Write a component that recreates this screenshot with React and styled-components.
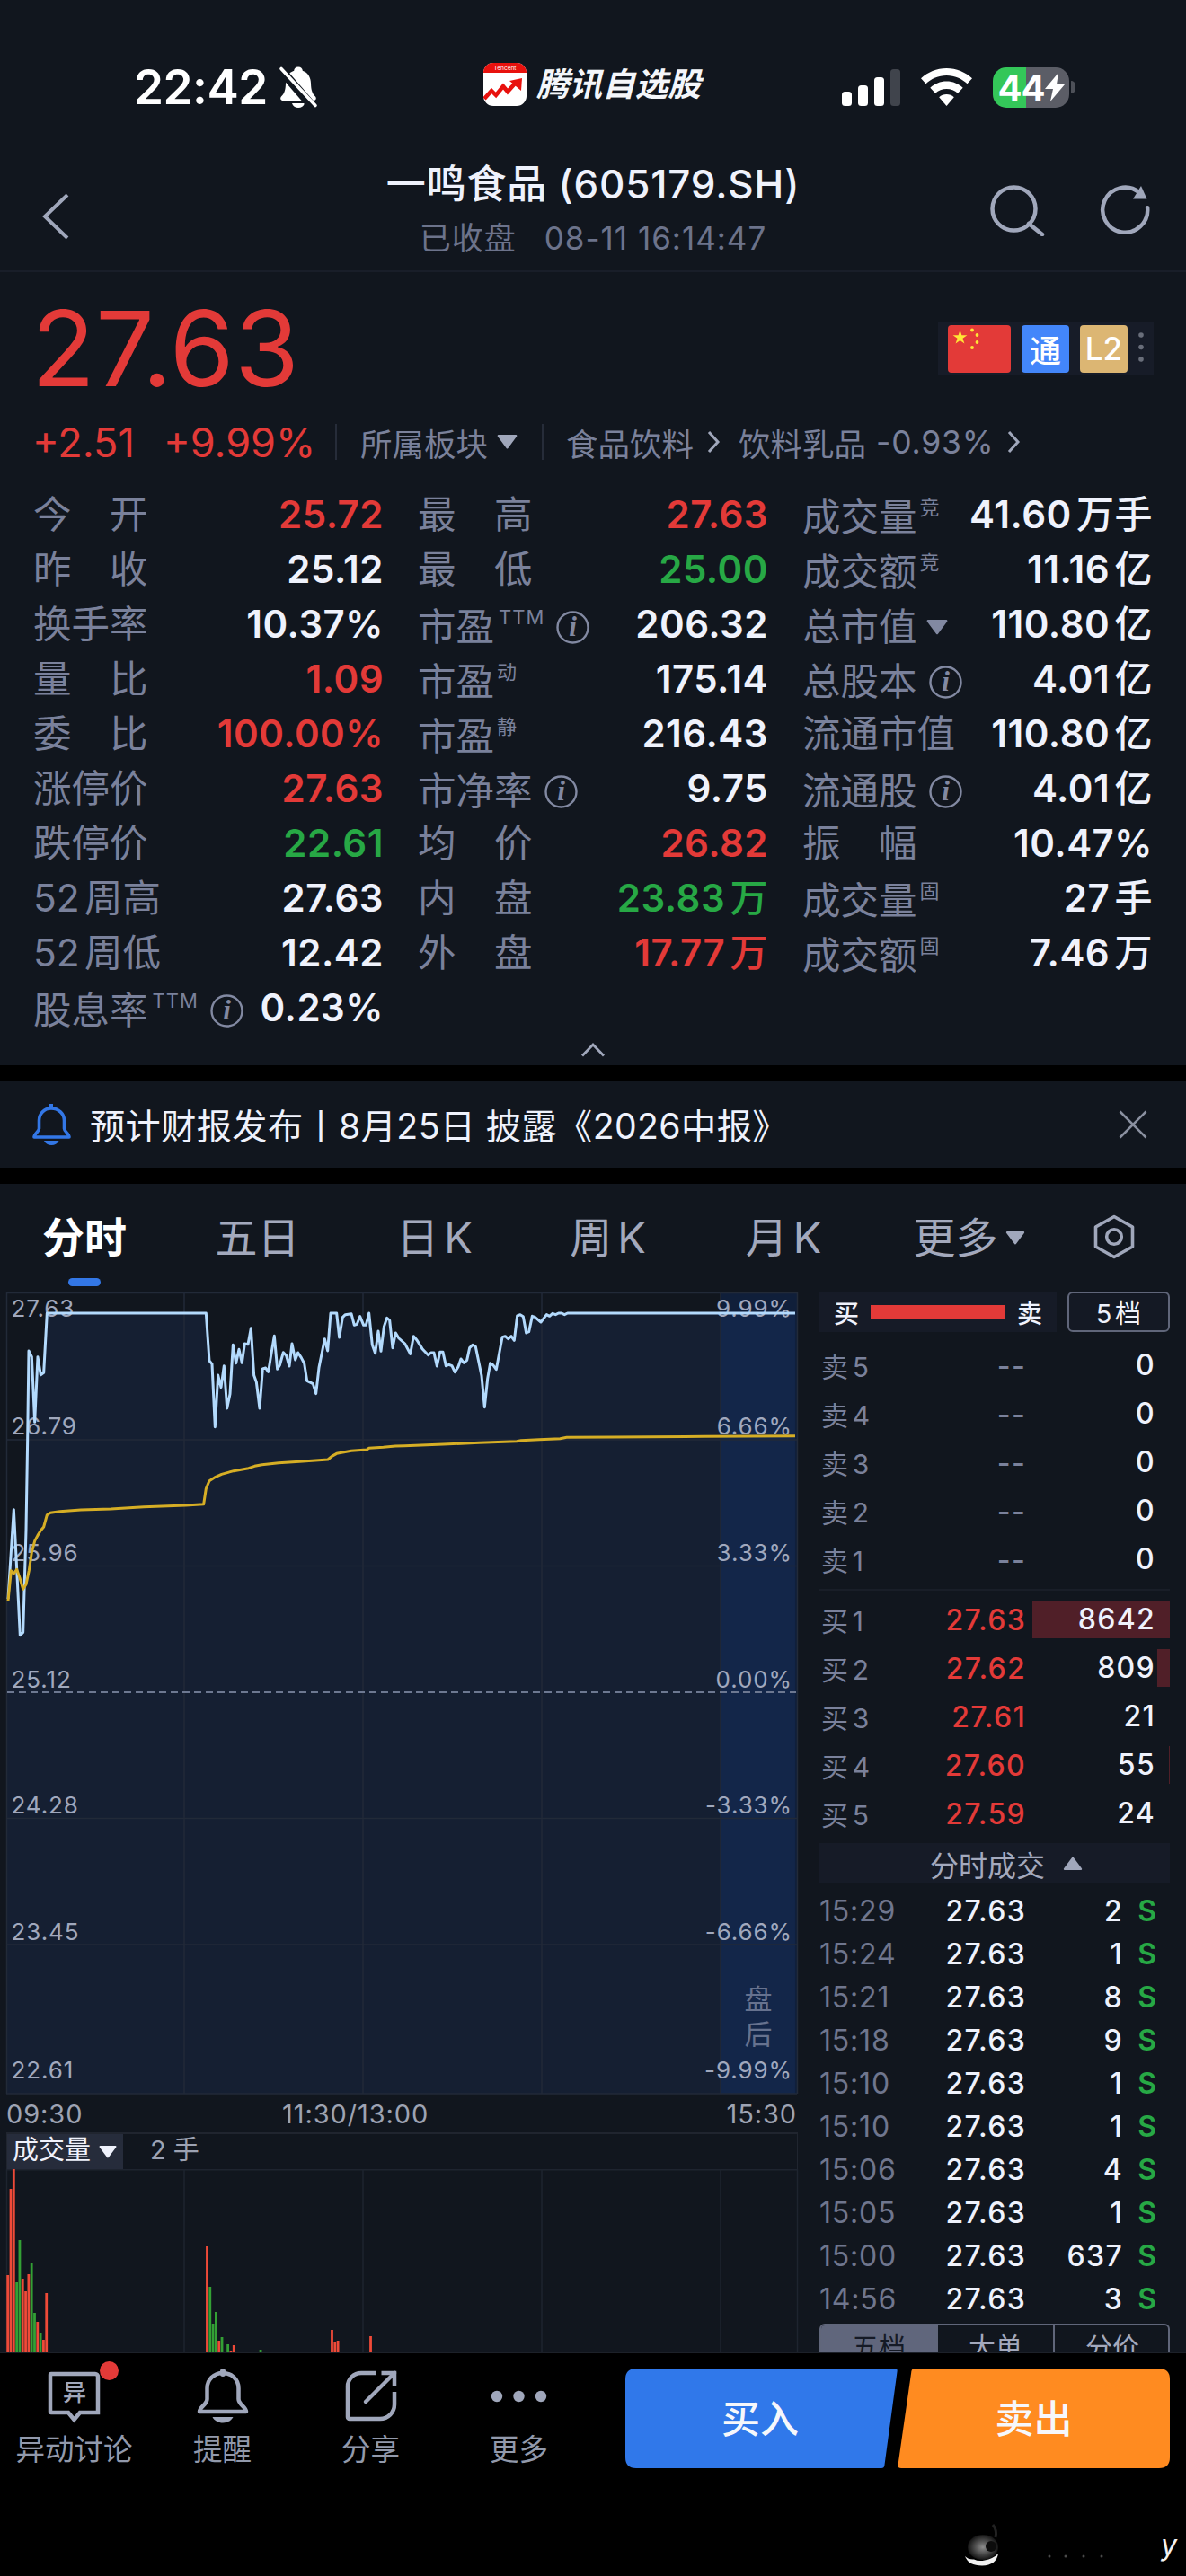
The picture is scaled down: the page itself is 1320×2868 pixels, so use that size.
import React from 'react';
import styled, { createGlobalStyle } from 'styled-components';

const RED = '#e33a38';
const GREEN = '#27a845';
const WHITE = '#eff2fc';
const LABEL = '#7a819b';
const ICON = '#a0a7bb';

const tones = { up: RED, down: GREEN, flat: WHITE };

const GlobalStyle = createGlobalStyle`
  * { box-sizing: border-box; }
  body {
    margin: 0;
    background: #000;
    font-family: Inter, "Noto Sans CJK SC", sans-serif;
    text-autospace: normal;
  }
  svg { display: block; flex: none; }
`;

const Screen = styled.div`
  width: 1320px;
  height: 2868px;
  overflow: hidden;
  background: #000;
  color: ${WHITE};
  white-space: nowrap;
`;

/* ---------- status bar ---------- */

const StatusBar = styled.div`
  display: grid;
  grid-template-columns: 538px 399px 1fr;
  align-items: center;
  height: 150px;
  padding-top: 44px;
  background: #11161e;
`;

const StatusLeft = styled.div`
  display: flex;
  align-items: center;
  gap: 12px;
  padding-left: 149px;
`;

const Clock = styled.span`
  font-size: 53px;
  font-weight: 600;
  letter-spacing: -0.5px;
  color: #fff;
`;

const Brand = styled.div`
  display: flex;
  align-items: center;
  gap: 11px;
  padding-bottom: 7px;
`;

const BrandName = styled.span`
  font-size: 36.6px;
  font-weight: 700;
  font-style: italic;
  line-height: 48px;
  color: #f4f6fa;
`;

const StatusRight = styled.div`
  display: flex;
  align-items: center;
  gap: 23px;
`;

const Battery = styled.div`
  display: flex;
  align-items: center;
  gap: 2px;
`;

const BatteryBody = styled.div`
  display: flex;
  align-items: center;
  justify-content: center;
  width: 85px;
  height: 45px;
  border-radius: 15px;
  background: linear-gradient(90deg, #34c759 44%, #5b5d66 44%);
  font-size: 40px;
  font-weight: 700;
  letter-spacing: -1px;
  color: #fff;
`;

const BatteryTip = styled.div`
  width: 5px;
  height: 14px;
  border-radius: 0 5px 5px 0;
  background: #4d5058;
`;

/* ---------- navigation ---------- */

const NavBar = styled.div`
  display: grid;
  grid-template-columns: 240px 1fr 240px;
  height: 153px;
  border-bottom: 2px solid #191e29;
  background: #11161e;
`;

const NavBack = styled.div`
  padding: 64px 0 0 46px;
`;

const NavTitle = styled.div`
  display: flex;
  flex-direction: column;
  align-items: center;
  padding-top: 25px;
`;

const StockName = styled.div`
  font-size: 44px;
  font-weight: 500;
  line-height: 60px;
  letter-spacing: 0.8px;
`;

const MarketState = styled.div`
  display: flex;
  gap: 31px;
  font-size: 35px;
  line-height: 60px;
  letter-spacing: 1px;
  color: #6c738b;
`;

const NavActions = styled.div`
  display: flex;
  gap: 61px;
  padding: 55px 0 0 21px;
`;

/* ---------- quote ---------- */

const Quote = styled.section`
  height: 883px;
  background: #11161e;
`;

const PriceRow = styled.div`
  display: flex;
  align-items: center;
  justify-content: space-between;
  height: 170px;
  padding: 0 36px 0 35px;
`;

const Price = styled.div`
  font-size: 116px;
  line-height: 170px;
  letter-spacing: 0.5px;
  color: ${RED};
`;

const Badges = styled.div`
  display: flex;
  align-items: center;
  gap: 12px;
  height: 60px;
  padding: 0 11px;
  background: #171c28;
`;

const Badge = styled.div`
  display: flex;
  align-items: center;
  justify-content: center;
  width: 53px;
  height: 53px;
  border-radius: 4px;
  background: ${p => p.$bg};
  color: #fff;
  font-size: 35px;
  font-weight: 500;
`;

const ChangeRow = styled.div`
  display: flex;
  align-items: center;
  height: 38px;
  padding-left: 36px;
  font-size: 35.5px;
  color: ${LABEL};
`;

const Change = styled.span`
  width: ${p => p.$width}px;
  font-size: 45px;
  color: ${RED};
`;

const Divider = styled.span`
  width: 2px;
  height: 40px;
  background: #262c39;
`;

const Sector = styled.span`
  display: flex;
  align-items: center;
  gap: ${p => p.$gap || 15}px;
  padding-left: ${p => p.$left || 0}px;
  padding-right: ${p => p.$right || 0}px;
`;

const SectorChange = styled.span`
  margin-left: -4px;
  letter-spacing: 0.8px;
`;

const StatGrid = styled.div`
  display: grid;
  grid-template-columns: repeat(3, 390px);
  column-gap: 38px;
  padding: 31px 0 0 37px;
`;

const StatRow = styled.div`
  display: flex;
  align-items: center;
  justify-content: space-between;
  height: 61px;
`;

const StatLabel = styled.span`
  display: flex;
  align-items: center;
  margin-top: ${p => (p.$drop ? 7 : 0)}px;
  font-size: 42.5px;
  line-height: 54px;
  color: ${LABEL};
`;

const StatSup = styled.sup`
  margin: 0 0 22px ${p => (p.$latin ? 5 : 3)}px;
  font-size: 22px;
  line-height: 24px;
  letter-spacing: ${p => (p.$latin ? 1 : 0)}px;
`;

const StatIcon = styled.span`
  margin-left: ${p => p.$left}px;
`;

const StatValue = styled.span`
  font-size: 42px;
  font-weight: 600;
  line-height: 54px;
  letter-spacing: 0.5px;
  color: ${p => tones[p.$tone]};
`;

const StatUnit = styled.span`
  font-weight: 500;
`;

const Collapse = styled.div`
  display: flex;
  justify-content: center;
  padding-top: 8px;
`;

/* ---------- notice ---------- */

const Notice = styled.section`
  display: flex;
  align-items: center;
  height: 96px;
  margin: 18px 0;
  padding: 0 43px 0 35px;
  background: #11161e;
`;

const NoticeText = styled.span`
  flex: 1;
  padding: 0 0 3px 20px;
  font-size: 39.2px;
  letter-spacing: 0.4px;
  text-autospace: no-autospace;
`;

/* ---------- period tabs ---------- */

const Tabs = styled.div`
  display: flex;
  align-items: flex-start;
  height: 120px;
  padding: 25px 0 0;
  background: #11161e;
`;

const Tab = styled.div`
  display: flex;
  flex-direction: column;
  align-items: center;
  width: ${p => p.$width}px;
  padding-left: ${p => p.$shift || 0}px;
  font-size: 47px;
  font-weight: ${p => (p.$active ? 700 : 400)};
  line-height: 70px;
  color: ${p => (p.$active ? '#fff' : '#a3a9bd')};

  &::after {
    content: '';
    width: 36px;
    height: 9px;
    margin-top: 10px;
    border-radius: 5px;
    background: ${p => (p.$active ? '#3377e6' : 'transparent')};
  }
`;

const TabMore = styled.span`
  display: flex;
  align-items: center;
  gap: 8px;
`;

const TabSettings = styled.div`
  padding: 9px 0 0 43px;
`;

/* ---------- main area ---------- */

const Main = styled.main`
  display: grid;
  grid-template-columns: 912px 390px;
  height: 1181px;
  overflow: hidden;
  background: #11161e;
`;

const ChartColumn = styled.div`
  display: flex;
  flex-direction: column;
`;

const TimeAxis = styled.div`
  display: grid;
  grid-template-columns: 307px 1fr auto;
  align-items: center;
  width: 880px;
  height: 42px;
  margin-left: 7px;
  font-size: 29px;
  letter-spacing: 0.9px;
  color: #9da3b3;
`;

const VolumeHeader = styled.div`
  display: flex;
  align-items: center;
  width: 881px;
  height: 41px;
  margin-left: 7px;
  border: 1px solid #20252f;
  border-width: 2px 1px 0;
  font-size: 29px;
  line-height: 36px;
  color: #9da3b3;

  span { padding-bottom: 4px; }
`;

const VolumePicker = styled.div`
  display: flex;
  align-items: center;
  gap: 9px;
  width: 129px;
  height: 39px;
  margin-right: 30px;
  padding-left: 6px;
  background: #262c3b;
  color: ${WHITE};
`;

const Book = styled.aside`
  display: flex;
  flex-direction: column;
`;

const BookHead = styled.div`
  display: flex;
  gap: 12px;
  height: 45px;
`;

const RatioBar = styled.div`
  display: flex;
  align-items: center;
  justify-content: space-between;
  width: 264px;
  height: 45px;
  padding: 0 16px;
  background: #161b27;
  font-size: 28px;
  font-weight: 500;

  i {
    width: 150px;
    height: 15px;
    background: ${RED};
  }
`;

const LevelButton = styled.div`
  display: flex;
  align-items: center;
  justify-content: center;
  width: 114px;
  height: 45px;
  padding-bottom: 2px;
  border: 2px solid #60667a;
  border-radius: 6px;
  background: #141924;
  font-size: 29px;
`;

const Levels = styled.div`
  padding: ${p => p.$pad};
  border-bottom: ${p => (p.$line ? '2px solid #191e28' : 'none')};
`;

const LevelRow = styled.div`
  display: grid;
  grid-template-columns: 90px 140px 160px;
  align-items: center;
  height: 54px;
  font-size: 32px;
  letter-spacing: 1.3px;
  text-align: right;
`;

const LevelName = styled.span`
  padding-left: 2px;
  font-size: 30px;
  text-align: left;
  color: ${LABEL};
  letter-spacing: 1px;
`;

const LevelPrice = styled.span`
  font-weight: 450;
  color: ${p => (p.$empty ? LABEL : RED)};
`;

const LevelVolume = styled.span`
  height: 42px;
  margin-left: 7px;
  padding-right: 16px;
  line-height: 42px;
  font-weight: 500;
  background: linear-gradient(#501f28, #501f28) no-repeat right / ${p => p.$bar}px 42px;
`;

const TradesHead = styled.div`
  display: flex;
  align-items: center;
  justify-content: center;
  gap: 20px;
  height: 45px;
  padding-left: 26px;
  background: #161b27;
  font-size: 32px;
  color: #a3a9bd;
`;

const Trades = styled.div`
  padding-top: 6px;
`;

const TradeRow = styled.div`
  display: grid;
  grid-template-columns: 90px 140px 108px 37px;
  align-items: center;
  height: 48px;
  font-size: 32px;
  font-weight: 500;
  letter-spacing: 1.3px;
  text-align: right;

  time {
    font-weight: 400;
    letter-spacing: 0.8px;
    text-align: left;
    color: #6f768e;
  }

  b {
    font-weight: 600;
    letter-spacing: 0;
    color: ${GREEN};
  }
`;

const Segments = styled.div`
  display: grid;
  grid-template-columns: repeat(3, 130px);
  height: 54px;
  margin-top: 4px;
  overflow: hidden;
  border: 2px solid #60667a;
  border-radius: 6px;
`;

const Segment = styled.div`
  border-right: 2px solid #60667a;
  background: ${p => (p.$active ? '#60667c' : 'transparent')};
  color: ${p => (p.$active ? '#151a26' : '#a3a9bd')};
  font-size: 30px;
  line-height: 49px;
  text-align: center;
`;

/* ---------- bottom bar ---------- */

const BottomBar = styled.footer`
  display: flex;
  height: 170px;
  border-top: 1px solid #1d2129;
  background: #000;
`;

const Action = styled.div`
  display: flex;
  flex-direction: column;
  align-items: center;
  gap: 8px;
  width: 165px;
  padding-top: 12px;
  font-size: 32.5px;
  line-height: 48px;
  color: #9299ab;

  svg { overflow: visible; }
`;

const TradeButton = styled.div`
  display: flex;
  align-items: center;
  justify-content: center;
  width: 303px;
  height: 111px;
  margin: 17px 0 0 ${p => p.$left}px;
  padding-bottom: 6px;
  padding-right: ${p => p.$right || 0}px;
  clip-path: path('${p => p.$shape}');
  background: ${p => p.$bg};
  font-size: 43px;
  font-weight: 500;
  color: #f6f7fb;
`;

const Watermark = styled.div`
  display: flex;
  justify-content: flex-end;
  padding: 20px 8px 0 0;
`;

/* ---------- icons ---------- */

const Triangle = ({ w, h, color, up }) => (
  <svg width={w} height={h} viewBox="0 0 20 14">
    <path
      d={up ? 'M1.5 13h17L10 1.5z' : 'M1.5 1h17L10 12.5z'}
      fill={color}
      stroke={color}
      strokeWidth="2"
      strokeLinejoin="round"
    />
  </svg>
);

const ChevronSmall = () => (
  <svg width="15" height="26" viewBox="0 0 15 26" fill="none">
    <path d="M2 2l10 11L2 24" stroke={ICON} strokeWidth="3" />
  </svg>
);

const InfoIcon = () => (
  <svg width="37" height="37" viewBox="0 0 37 37">
    <circle cx="18.5" cy="18.5" r="17" fill="none" stroke="#8289a2" strokeWidth="2.4" />
    <text
      x="18.5"
      y="28"
      textAnchor="middle"
      fontFamily="Liberation Serif, serif"
      fontStyle="italic"
      fontWeight="700"
      fontSize="31"
      fill="#8289a2"
    >
      i
    </text>
  </svg>
);

const MuteBell = () => (
  <svg width="44" height="48" viewBox="0 0 44 48">
    <path
      d="M22 1.5c3 0 4.600 2 4.800 4.200 6 2 9 7.300 9.200 14 .2 8 1.600 11.300 5 14.800 1.600 1.800.7 4.500-2 4.500H5c-2.700 0-3.600-2.700-2-4.500 3.400-3.500 4.800-6.800 5-14.800.2-6.700 3.200-12 9.200-14C17.400 3.500 19 1.500 22 1.500z"
      fill="#fff"
    />
    <path d="M15 42h14c-1 3.200-3.600 5-7 5s-6-1.800-7-5z" fill="#fff" />
    <path d="M0 2l40 46" stroke="#11161e" strokeWidth="10" />
    <path d="M3 3.500l38 41" stroke="#fff" strokeWidth="3.600" strokeLinecap="round" />
  </svg>
);

const BrandLogo = () => (
  <svg width="48" height="48" viewBox="0 0 48 48">
    <rect width="48" height="48" rx="11" fill="#fff" />
    <path d="M0 11A11 11 0 0 1 11 0h26a11 11 0 0 1 11 11z" fill="#e8110d" />
    <text x="24" y="8" textAnchor="middle" fontSize="6.500" fill="#fff">Tencent</text>
    <path d="M1 40l8-9 5 5 8-10 5 6 9-10" fill="none" stroke="#e8110d" strokeWidth="4.500" />
    <path d="M29 20l14-3-1 14z" fill="#e8110d" />
  </svg>
);

const Signal = () => (
  <svg width="65" height="42" viewBox="0 0 65 42" fill="#fff">
    <rect x="0" y="26" width="11" height="16" rx="3.500" />
    <rect x="18" y="19" width="11" height="23" rx="3.500" />
    <rect x="36" y="10" width="11" height="32" rx="3.500" />
    <rect x="54" y="1" width="11" height="41" rx="3.500" fill="#40444c" />
  </svg>
);

const Wifi = () => (
  <svg width="57" height="42" viewBox="0 0 57 42" fill="#fff">
    <path d="M28.500 0C39.500 0 49.500 4.300 57 11.300l-5.500 6C45.500 11.500 37.400 8 28.500 8S11.500 11.500 5.500 17.300L0 11.300C7.500 4.300 17.500 0 28.500 0z" />
    <path d="M28.500 14.500c7 0 13.400 2.700 18.200 7.200l-5.700 6.100c-3.300-3-7.700-4.900-12.500-4.900s-9.200 1.900-12.500 4.900l-5.700-6.100c4.800-4.500 11.200-7.200 18.200-7.200z" />
    <path d="M28.500 29c3.200 0 6.100 1.200 8.300 3.200L28.500 42l-8.300-9.800c2.200-2 5.100-3.200 8.300-3.200z" />
  </svg>
);

const Bolt = () => (
  <svg width="22" height="32" viewBox="0 0 22 32">
    <path d="M15 0L0 18h9L6 32l16-19h-9z" fill="#fff" />
  </svg>
);

const BackIcon = () => (
  <svg width="32" height="54" viewBox="0 0 32 54" fill="none">
    <path d="M29 3L4 27l25 24" stroke={ICON} strokeWidth="4" />
  </svg>
);

const SearchIcon = () => (
  <svg width="62" height="58" viewBox="0 0 62 58" fill="none" stroke={ICON} strokeWidth="4.500">
    <circle cx="27.500" cy="27.500" r="24" />
    <path d="M44 44l15 12" strokeLinecap="round" />
  </svg>
);

const RefreshIcon = () => (
  <svg width="58" height="58" viewBox="0 0 58 58" fill="none">
    <path d="M53 25A25 25 0 1 1 43 8.500" stroke={ICON} strokeWidth="4.500" strokeLinecap="round" transform="rotate(3 28 28)" />
    <path d="M46 2l6.500 14.500H37z" fill={ICON} />
  </svg>
);

const Flag = () => (
  <svg width="70" height="53" viewBox="0 0 70 53">
    <rect width="70" height="53" rx="4" fill={RED} />
    <g fill="#ffe636">
      <path d="M13.500 5.500l1.900 5.700h6l-4.900 3.500 1.900 5.800-4.900-3.600-4.900 3.600 1.900-5.800-4.900-3.500h6z" />
      <circle cx="27" cy="5.500" r="1.900" />
      <circle cx="32.500" cy="11" r="1.900" />
      <circle cx="32.500" cy="19" r="1.900" />
      <circle cx="27" cy="25" r="1.900" />
    </g>
  </svg>
);

const Dots = () => (
  <svg width="6" height="36" viewBox="0 0 6 36" fill="#696e7a">
    <circle cx="3" cy="3" r="2.800" />
    <circle cx="3" cy="16.500" r="2.800" />
    <circle cx="3" cy="30" r="2.800" />
  </svg>
);

const NoticeBell = () => (
  <svg width="45" height="48" viewBox="0 0 45 48" fill="none">
    <path
      d="M22 6c-8 0-13.500 6-13.500 13.500v9c0 3-5.500 6-5.500 9.500h39c0-3.500-5.500-6.500-5.500-9.500v-9C36.500 12 30 6 22 6z"
      stroke="#3377e6"
      strokeWidth="3.600"
      strokeLinejoin="round"
    />
    <path d="M22 1v5" stroke="#3377e6" strokeWidth="4" />
    <path d="M14 42h16.500c-1.500 3.200-4.600 5-8.200 5s-6.800-1.800-8.300-5z" fill="#3377e6" />
  </svg>
);

const CloseIcon = () => (
  <svg width="32" height="32" viewBox="0 0 32 32">
    <path d="M1.500 1.500l29 29M30.500 1.500l-29 29" stroke="#8a90a0" strokeWidth="2.600" />
  </svg>
);

const HexIcon = () => (
  <svg width="46" height="50" viewBox="0 0 46 50" fill="none" stroke={ICON} strokeWidth="3.600" strokeLinejoin="round">
    <path d="M23 2.500l20.500 11.500v22L23 47.500 2.500 36V14z" />
    <circle cx="23" cy="25" r="8.300" />
  </svg>
);

const DiscussIcon = () => (
  <svg width="116" height="64" viewBox="25 0 116 64" fill="none">
    <path
      d="M57 11h49a3 3 0 0 1 3 3v40H89l-6.500 8-6.500-8H57a1 1 0 0 1-1-1V12a1 1 0 0 1 1-1z"
      stroke={ICON}
      strokeWidth="4.500"
    />
    <text x="83" y="41" textAnchor="middle" fontSize="26" fontWeight="500" fill={ICON}>异</text>
    <circle cx="121.500" cy="7.500" r="10.500" fill={RED} />
  </svg>
);

const AlertIcon = () => (
  <svg width="60" height="64" viewBox="0 0 60 64" fill="none">
    <path
      d="M30 10c-10 0-17.500 7.500-17.500 17v12c0 6-8.500 9-8.500 14h52c0-5-8.500-8-8.500-14V27C47.500 17.500 40 10 30 10z"
      stroke={ICON}
      strokeWidth="4.500"
      strokeLinejoin="round"
    />
    <path d="M30 8v3" stroke={ICON} strokeWidth="6" strokeLinecap="round" />
    <path d="M18.500 59h23c-2 4-6.500 6.500-11.500 6.500s-9.500-2.500-11.500-6.500z" fill={ICON} />
  </svg>
);

const ShareIcon = () => (
  <svg width="60" height="64" viewBox="0 0 60 64" fill="none" stroke={ICON} strokeWidth="4.500">
    <path d="M35 10H19A15 15 0 0 0 4 25v34a2 2 0 0 0 2 2h34a16 16 0 0 0 16-16V31" />
    <path d="M41.500 10H56v14.500" />
    <path d="M56 10L24 42" strokeLinecap="round" />
  </svg>
);

const MoreIcon = () => (
  <svg width="64" height="64" viewBox="0 0 64 64" fill={ICON}>
    <circle cx="7" cy="36" r="6.200" />
    <circle cx="31.500" cy="36" r="6.200" />
    <circle cx="56" cy="36" r="6.200" />
  </svg>
);

/* ---------- data ---------- */

const stats = [
  [
    { label: '今　开', value: '25.72', tone: 'up' },
    { label: '昨　收', value: '25.12' },
    { label: '换手率', value: '10.37%' },
    { label: '量　比', value: '1.09', tone: 'up' },
    { label: '委　比', value: '100.00%', tone: 'up' },
    { label: '涨停价', value: '27.63', tone: 'up' },
    { label: '跌停价', value: '22.61', tone: 'down' },
    { label: '52周高', value: '27.63' },
    { label: '52周低', value: '12.42' },
    { label: '股息率', sup: 'TTM', info: true, value: '0.23%' },
  ],
  [
    { label: '最　高', value: '27.63', tone: 'up' },
    { label: '最　低', value: '25.00', tone: 'down' },
    { label: '市盈', sup: 'TTM', info: true, value: '206.32' },
    { label: '市盈', sup: '动', value: '175.14' },
    { label: '市盈', sup: '静', value: '216.43' },
    { label: '市净率', info: true, value: '9.75' },
    { label: '均　价', value: '26.82', tone: 'up' },
    { label: '内　盘', value: '23.83', unit: '万', tone: 'down' },
    { label: '外　盘', value: '17.77', unit: '万', tone: 'up' },
  ],
  [
    { label: '成交量', sup: '竞', value: '41.60', unit: '万手' },
    { label: '成交额', sup: '竞', value: '11.16', unit: '亿' },
    { label: '总市值', menu: true, value: '110.80', unit: '亿' },
    { label: '总股本', info: true, value: '4.01', unit: '亿' },
    { label: '流通市值', value: '110.80', unit: '亿' },
    { label: '流通股', info: true, value: '4.01', unit: '亿' },
    { label: '振　幅', value: '10.47%' },
    { label: '成交量', sup: '固', value: '27', unit: '手' },
    { label: '成交额', sup: '固', value: '7.46', unit: '万' },
  ],
];

const periods = [
  { name: '分时', width: 188, active: true },
  { name: '五日', width: 197 },
  { name: '日K', width: 197 },
  { name: '周K', width: 189 },
  { name: '月K', width: 202 },
];

const asks = ['卖5', '卖4', '卖3', '卖2', '卖1'];

const bids = [
  { name: '买1', price: '27.63', volume: '8642', bar: 153 },
  { name: '买2', price: '27.62', volume: '809', bar: 14 },
  { name: '买3', price: '27.61', volume: '21', bar: 0 },
  { name: '买4', price: '27.60', volume: '55', bar: 1 },
  { name: '买5', price: '27.59', volume: '24', bar: 0 },
];

const trades = [
  ['15:29', 2],
  ['15:24', 1],
  ['15:21', 8],
  ['15:18', 9],
  ['15:10', 1],
  ['15:10', 1],
  ['15:06', 4],
  ['15:05', 1],
  ['15:00', 637],
  ['14:56', 3],
];

// both lines are stored at three times the drawn size
const priceLine =
  '27,1080 46,782 55,960 67,1202 77,1192 87,850 92,550 96,252 106,272 116,490 126,272 136,332 146,325 157,126 ' +
  '688,126 699,285 708,296 718,506 728,333 738,374 748,302 758,444 768,396 778,232 788,293 798,247 808,292 ' +
  '817,228 828,230 838,176 848,334 856,356 867,444 877,312 887,309 896,322 906,260 916,202 926,313 934,300 ' +
  '946,257 956,268 966,303 975,228 986,282 995,258 1006,275 1016,294 1025,352 1045,362 1055,395 1065,308 ' +
  '1075,258 1084,212 1094,252 1104,126 1124,126 1133,207 1144,140 1153,131 1173,128 1183,166 1192,163 ' +
  '1202,137 1214,166 1222,166 1232,126 1243,232 1253,260 1263,186 1272,253 1282,172 1292,142 1301,150 ' +
  '1311,242 1321,192 1332,210 1352,228 1370,262 1381,203 1392,216 1410,245 1430,266 1439,258 1449,258 ' +
  '1459,303 1469,256 1479,256 1489,302 1499,298 1509,302 1519,323 1530,305 1539,279 1549,292 1559,283 ' +
  '1568,242 1578,232 1588,238 1608,335 1618,440 1628,345 1637,293 1647,300 1657,314 1677,206 1687,203 ' +
  '1697,212 1707,203 1717,217 1727,135 1737,131 1747,137 1757,192 1766,188 1777,136 1786,139 1806,156 ' +
  '1825,131 1835,136 1845,127 1855,131 1865,126 1875,126 1885,131 1895,126 2655,126';

const averageLine =
  '27,1087 37,986 46,996 56,982 66,1010 77,1048 87,1032 97,985 106,925 116,887 126,868 136,852 146,840 ' +
  '157,800 168,793 200,788 270,783 370,780 480,773 620,768 680,764 688,712 699,686 720,673 740,664 780,653 ' +
  '830,644 850,637 875,632 930,626 1000,622 1095,615 1108,604 1124,595 1173,586 1225,582 1232,577 1280,574 ' +
  '1320,570 1350,569 1480,564 1600,559 1725,554 1740,551 1800,548 1870,545 1892,541 2050,540 2350,538 2655,536';

const scale = [
  ['27.63', '9.99%', 46],
  ['26.79', '6.66%', 177],
  ['25.96', '3.33%', 318],
  ['25.12', '0.00%', 459],
  ['24.28', '-3.33%', 599],
  ['23.45', '-6.66%', 740],
  ['22.61', '-9.99%', 894],
];

// minute index, height, rising
const volumes = [
  [0, 86, 1], [1, 182, 1], [2, 204, 1], [3, 78, 0], [4, 125, 0], [5, 82, 1], [6, 68, 1],
  [7, 87, 1], [8, 100, 0], [9, 44, 0], [10, 34, 1], [11, 22, 0], [12, 14, 1], [13, 66, 1],
  [67, 118, 1], [68, 73, 0], [69, 32, 0], [70, 45, 0], [71, 13, 1], [72, 17, 0],
  [74, 9, 0], [75, 2, 1], [76, 8, 1], [85, 3, 0], [109, 25, 1], [110, 12, 1], [111, 13, 1], [122, 18, 1],
];

const columns = [205, 404, 603, 802];

/* ---------- parts ---------- */

const Stat = ({ label, sup, info, menu, value, unit, tone = 'flat' }) => (
  <StatRow>
    <StatLabel $drop={sup || info || menu}>
      {label}
      {sup && <StatSup $latin={sup === 'TTM'}>{sup}</StatSup>}
      {info && (
        <StatIcon $left={13}>
          <InfoIcon />
        </StatIcon>
      )}
      {menu && (
        <StatIcon $left={10}>
          <Triangle w={24} h={17} color="#8289a2" />
        </StatIcon>
      )}
    </StatLabel>
    <StatValue $tone={tone}>
      {value}
      {unit && <StatUnit>{unit}</StatUnit>}
    </StatValue>
  </StatRow>
);

const PriceChart = () => (
  <svg width="900" height="894" viewBox="0 18 900 894">
    <g transform="scale(0.33333)">
      <polygon points={`24,1080 ${priceLine} 2655,2733 24,2733`} fill="#151f32" />
    </g>
    <rect x="802" y="19" width="85" height="892" fill="#0f3b8c" fillOpacity="0.26" />
    <g stroke="#222a38" strokeWidth="1.500">
      <path d="M7 19.500H887M7 911H887M7.500 19V911M887.500 19V911" fill="none" />
      {columns.map(x => (
        <path key={x} d={`M${x} 19V911`} />
      ))}
      {[183, 323.5, 604.5, 745].map(y => (
        <path key={y} d={`M7 ${y}H887`} />
      ))}
    </g>
    <path d="M8 464H886" stroke="#6d7891" strokeWidth="2.200" strokeDasharray="8 5" />
    <g fontSize="26" letterSpacing="0.9" fill="#a0a8bd">
      {scale.map(([price, percent, y]) => (
        <React.Fragment key={price}>
          <text x="12.500" y={y}>{price}</text>
          <text x="882" y={y} textAnchor="end">{percent}</text>
        </React.Fragment>
      ))}
    </g>
    <g fontSize="31" fill="#66728f" textAnchor="middle">
      <text x="844" y="817">盘</text>
      <text x="844" y="856">后</text>
    </g>
    <g transform="scale(0.33333)" fill="none" strokeWidth="9" strokeLinejoin="round">
      <polyline points={priceLine} stroke="#b3dafd" />
      <polyline points={averageLine} stroke="#d6ae25" />
    </g>
  </svg>
);

const VolumeChart = () => (
  <svg width="900" height="205" viewBox="0 0 900 205">
    <g stroke="#1e242f" strokeWidth="1.500" fill="none">
      <path d="M7 0.800H887M7.500 0V205M887.500 0V205" />
      {columns.map(x => (
        <path key={x} d={`M${x} 0V205`} />
      ))}
    </g>
    {volumes.map(([i, h, up]) => (
      <rect key={i} x={7.3 + i * 3.31} y={204 - h} width="2.800" height={h} fill={up ? '#ef4a38' : '#33a035'} />
    ))}
  </svg>
);

const App = () => {
  return (
    <>
      <GlobalStyle />
      <Screen>
        <StatusBar>
          <StatusLeft>
            <Clock>22:42</Clock>
            <MuteBell />
          </StatusLeft>
          <Brand>
            <BrandLogo />
            <BrandName>腾讯自选股</BrandName>
          </Brand>
          <StatusRight>
            <Signal />
            <Wifi />
            <Battery>
              <BatteryBody>
                44
                <Bolt />
              </BatteryBody>
              <BatteryTip />
            </Battery>
          </StatusRight>
        </StatusBar>

        <NavBar>
          <NavBack>
            <BackIcon />
          </NavBack>
          <NavTitle>
            <StockName>一鸣食品 (605179.SH)</StockName>
            <MarketState>
              <span>已收盘</span>
              <span>08-11 16:14:47</span>
            </MarketState>
          </NavTitle>
          <NavActions>
            <SearchIcon />
            <RefreshIcon />
          </NavActions>
        </NavBar>

        <Quote>
          <PriceRow>
            <Price>27.63</Price>
            <Badges>
              <Flag />
              <Badge $bg="#4386fa">通</Badge>
              <Badge $bg="#dcb673">L2</Badge>
              <Dots />
            </Badges>
          </PriceRow>
          <ChangeRow>
            <Change $width={146}>+2.51</Change>
            <Change $width={191}>+9.99%</Change>
            <Divider />
            <Sector $gap={10} $left={26} $right={27}>
              所属板块
              <Triangle w={23} h={16} color={ICON} />
            </Sector>
            <Divider />
            <Sector $left={25} $right={20}>
              食品饮料
              <ChevronSmall />
            </Sector>
            <Sector>
              饮料乳品
              <SectorChange>-0.93%</SectorChange>
              <ChevronSmall />
            </Sector>
          </ChangeRow>
          <StatGrid>
            {stats.map((column, i) => (
              <div key={i}>
                {column.map((item, j) => (
                  <Stat key={j} {...item} />
                ))}
              </div>
            ))}
          </StatGrid>
          <Collapse>
            <svg width="28" height="18" viewBox="0 0 28 18" fill="none">
              <path d="M2 15.500L14 3l12 12.500" stroke={ICON} strokeWidth="2.800" />
            </svg>
          </Collapse>
        </Quote>

        <Notice>
          <NoticeBell />
          <NoticeText>预计财报发布丨8月25日 披露《2026中报》</NoticeText>
          <CloseIcon />
        </Notice>

        <Tabs>
          {periods.map(p => (
            <Tab key={p.name} $width={p.width} $active={p.active}>
              {p.name}
            </Tab>
          ))}
          <Tab $width={201} $shift={10}>
            <TabMore>
              更多
              <Triangle w={22} h={15} color={ICON} />
            </TabMore>
          </Tab>
          <TabSettings>
            <HexIcon />
          </TabSettings>
        </Tabs>

        <Main>
          <ChartColumn>
            <PriceChart />
            <TimeAxis>
              <span>09:30</span>
              <span>11:30/13:00</span>
              <span>15:30</span>
            </TimeAxis>
            <VolumeHeader>
              <VolumePicker>
                <span>成交量</span>
                <Triangle w={20} h={14} color={WHITE} />
              </VolumePicker>
              <span>2 手</span>
            </VolumeHeader>
            <VolumeChart />
          </ChartColumn>

          <Book>
            <BookHead>
              <RatioBar>
                买<i />卖
              </RatioBar>
              <LevelButton>5档</LevelButton>
            </BookHead>
            <Levels $pad="10px 0 6px" $line>
              {asks.map(name => (
                <LevelRow key={name}>
                  <LevelName>{name}</LevelName>
                  <LevelPrice $empty>--</LevelPrice>
                  <LevelVolume $bar={0}>0</LevelVolume>
                </LevelRow>
              ))}
            </Levels>
            <Levels $pad="5px 0 6px">
              {bids.map(bid => (
                <LevelRow key={bid.name}>
                  <LevelName>{bid.name}</LevelName>
                  <LevelPrice>{bid.price}</LevelPrice>
                  <LevelVolume $bar={bid.bar}>{bid.volume}</LevelVolume>
                </LevelRow>
              ))}
            </Levels>
            <TradesHead>
              分时成交
              <Triangle w={22} h={15} color={ICON} up />
            </TradesHead>
            <Trades>
              {trades.map(([time, volume], i) => (
                <TradeRow key={i}>
                  <time>{time}</time>
                  <span>27.63</span>
                  <span>{volume}</span>
                  <b>S</b>
                </TradeRow>
              ))}
            </Trades>
            <Segments>
              <Segment $active>五档</Segment>
              <Segment>大单</Segment>
              <Segment>分价</Segment>
            </Segments>
          </Book>
        </Main>

        <BottomBar>
          <Action>
            <DiscussIcon />
            <span>异动讨论</span>
          </Action>
          <Action>
            <AlertIcon />
            <span>提醒</span>
          </Action>
          <Action>
            <ShareIcon />
            <span>分享</span>
          </Action>
          <Action>
            <MoreIcon />
            <span>更多</span>
          </Action>
          <TradeButton
            $left={36}
            $right={3}
            $bg="#3078ea"
            $shape="M12 0H300Q303 0 302.600 3L288.400 108Q288 111 285 111H12Q0 111 0 99V12Q0 0 12 0Z"
          >
            买入
          </TradeButton>
          <TradeButton
            $left={0}
            $bg="#ff8b20"
            $shape="M18.400 0H291Q303 0 303 12V99Q303 111 291 111H4Q0 111 0.400 108L15.400 3Q16 0 18.400 0Z"
          >
            卖出
          </TradeButton>
        </BottomBar>

        <Watermark>
          <svg width="240" height="50" viewBox="0 0 240 50">
            <defs>
              <radialGradient id="eye">
                <stop offset="0" stopColor="#8d8d8d" />
                <stop offset="1" stopColor="#141414" />
              </radialGradient>
            </defs>
            <ellipse cx="22" cy="27" rx="17" ry="14" fill="url(#eye)" />
            <circle cx="31" cy="26" r="6" fill="#0c0c0c" />
            <path d="M2 37q4 4 10 3.500 5 2.500 12 1 9-1.500 15-7.500-2 13-18 13.500-15 0-19-10.500z" fill="#f2f2f2" />
            <path d="M33 2q5 6 3 14" stroke="#222" strokeWidth="3" fill="none" />
            <g fill="#4a4a4a">
              <circle cx="96" cy="37" r="1.500" />
              <circle cx="114" cy="37" r="1.500" />
              <circle cx="134" cy="37" r="1.500" />
              <circle cx="154" cy="37" r="1.500" />
            </g>
            <text x="220" y="36" fontSize="32" fontStyle="italic" fill="#f2f2f2">y</text>
          </svg>
        </Watermark>
      </Screen>
    </>
  );
};

export default App;
